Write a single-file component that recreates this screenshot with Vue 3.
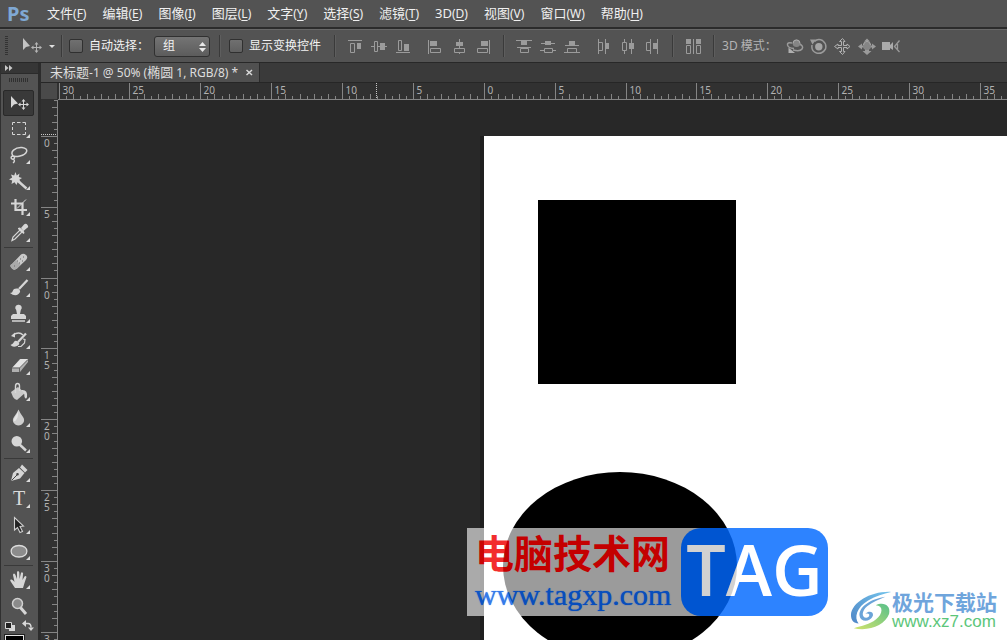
<script setup>
import { computed, onBeforeUnmount, onMounted, ref } from 'vue'

const menus = [
  ['文件', 'F'], ['编辑', 'E'], ['图像', 'I'], ['图层', 'L'], ['文字', 'Y'], ['选择', 'S'],
  ['滤镜', 'T'], ['3D', 'D'], ['视图', 'V'], ['窗口', 'W'], ['帮助', 'H'],
]

const L = '#d6d6d6'
const D = '#9b9b9b'
const fill = (d, f = L) => ({ d, f, s: 'none', w: 0 })
const line = (d, w = 1, s = L, f = 'none') => ({ d, f, s, w })

const toolGroups = [
  [
    { name: '移动工具', active: true, shapes: [fill('M2 3V15L5 11.500L9 10.500Z'), line('M14.500 7V16M10 11.500H19'), fill('M14.500 6l2 2.500h-4zM14.500 17l2-2.500h-4zM9 11.500l2.500-2v4zM20 11.500l-2.500-2v4z')] },
    { name: '矩形选框工具', more: true, shapes: [line('M3.500 6V3.500H6M8 3.500H11.500M13.500 3.500H16.500V6M16.500 8V11M16.500 13V15.500H13.500M11.500 15.500H8M6 15.500H3.500V13M3.500 11V8')] },
    { name: '套索工具', more: true, shapes: [line('M5 11.500C-1 7 7 2 13 2.500C21 3.500 18 9.500 11 11C8 11.700 6 12 4 11C1 11 2 15 4.500 14C6.500 13 5 11 4 11M4.500 14C6 15.500 5.500 17 4 18', 1.5)] },
    { name: '魔棒工具', more: true, shapes: [fill('M6.500 1L7.700 4.500L10.500 2.500L9.800 6L13 7L10.300 8.700L12 12L8.700 11L7.500 14L5.500 11.200L2.500 13L3.200 9.500L0 8.500L3.200 6.500L2 3.500L5.200 4.600Z'), line('M9 10L17.500 17.500', 2.4)] },
    { name: '裁剪工具', more: true, shapes: [line('M6.500 2V13H18M2 6.500H13.500V18', 2.2), line('M8 11.500L17 2.500', 1)] },
    { name: '吸管工具', more: true, shapes: [line('M3 17.500L4 14L11 7L13 9L6 16Z', 1.2, L, '#555'), fill('M9 5L11 4.500L13.500 7L15 8.500L15.500 10L14.500 11L9 6ZM12 5L15 1.500Q17 0 18.500 2T18 5L14.500 8Z')] },
  ],
  [
    { name: '修复画笔', more: true, shapes: [fill('M3 12L12 2.500Q14.500 1 17 3T17 8L8 16.500Q5 19 2.500 16T3 12Z', '#c9c9c9'), fill('M3 12L7 8L11.500 13L8 16.500Q5 19 2.500 16T3 12Z', '#aaa'), line('M8 9h1M11 7h1M10 11h1M13 9h1M5 14h1M14 5h1', 1, '#666')] },
    { name: '画笔工具', more: true, shapes: [line('M18.500 2L10 11', 2.3), fill('M1 15Q3.500 15 4 12.500T9 10.500Q13 13 9.500 16T1 15Z')] },
    { name: '仿制图章', more: true, shapes: [fill('M9.500 .800a3 3 0 0 1 2.300 5.200L11 10h4l2 2v3H2v-3l2-2h4L7.200 6A3 3 0 0 1 9.500 .800Z'), line('M3 17H16', 1.5)] },
    { name: '历史记录画笔', more: true, shapes: [line('M4 5Q10 1 14 5', 1.3), fill('M2 6L6 2.500V7.500Z'), line('M17 3.500L9 12', 2.2), fill('M1.500 15Q4 14 5 12T9 11.500Q12 14 8 16T1.500 15Z'), line('M14 9L16 9.500L15.500 13L12 16.500H9', 1.2)] },
    { name: '橡皮擦', more: true, shapes: [fill('M3 12L11 3H19V6L11 16H3Z', '#b0b0b0'), fill('M3.500 11.500L11.500 3H19L11 11.500Z', '#e3e3e3'), line('M3 12H10.500L19 3.500M10.500 12V16', 1, '#666')] },
    { name: '油漆桶', more: true, shapes: [fill('M2 10L9 5L16 11L8 18Q6 18 4 15Z', '#c9c9c9'), line('M6.500 11V4.500Q6.500 1.500 8.500 1.500T10.500 4V9', 1.4), fill('M12 8Q19 7 18 15Q17 18 15.500 15Q16 12 14 10Z')] },
    { name: '模糊工具', more: true, shapes: [fill('M9.500 1.500Q11 5 14 9C17 13 13.500 17.500 9.500 17.500S2 13 5 9Q8 5 9.500 1.500Z', '#cecece'), fill('M9 4Q9.500 9 7 12Q6 14 4.800 12.500Q4.500 11 6 9Z', '#e5e5e5')] },
    { name: '减淡工具', more: true, shapes: [line('M10 10L17 16.500', 2.4), fill('M7.800 2a5.300 5.300 0 1 1 0 10.600a5.300 5.300 0 1 1 0-10.600')] },
  ],
  [
    { name: '钢笔工具', more: true, shapes: [fill('M2 18L4 10L10 5L15.500 10L11 15.500Z'), fill('M11 4.500L13 1.500L18.500 7L16 9.500Z'), line('M2.500 17.500L8.500 11.500', 1, '#444'), fill('M8.500 10a1.300 1.300 0 1 1 0 2.600a1.300 1.300 0 1 1 0-2.600', '#444')] },
    { name: '文字工具', more: true, letter: 'T', shapes: [] },
    { name: '路径选择', more: true, shapes: [line('M5.500 2.500V15L8.500 12.500L11 17.500L13.500 16.500L11 11.500L14.500 11Z', 1.1, '#d0d0d0', '#222')] },
    { name: '椭圆工具', more: true, shapes: [line('M10 4.500c10.500 0 10.500 11.500 0 11.500s-10.500-11.500 0-11.500', 1.3, '#dcdcdc', '#8c8c8c')] },
  ],
  [
    { name: '抓手工具', more: true, shapes: [fill('M6 18L2 12Q.500 10 2 9.500T5.500 12L4 5Q4 3.500 5 3.500T6.500 5L8 9L8 2.500Q8 1 9 1T10.300 2.500L10.500 9L12 3Q12.500 2 13.500 2.500T14 4L13.500 10L15.500 6.500Q17 5.500 17.500 7L15.500 13L14 18Z')] },
    { name: '缩放工具', shapes: [line('M11 11L17 18', 3), line('M8.500 2.500a5 5 0 1 1 0 10a5 5 0 1 1 0-10', 1.5, '#d0d0d0', '#8b8b8b')] },
  ],
]

const alignVertical = [
  { name: '顶对齐', shapes: [line('M1 2.500H15', 1, D), line('M3.500 5.500H7.500V14.500H3.500Z', 1, D), fill('M10 5H14V11H10Z', D)] },
  { name: '垂直居中对齐', shapes: [line('M0 8.500H3M7 8.500H16M3.500 3.500H6.500V13.500H3.500Z', 1, D), fill('M9 5H14V12H9Z', D)] },
  { name: '底对齐', shapes: [line('M1 14.500H15M3.500 2.500H6.500V12.500H3.500Z', 1, D), fill('M9 6H14V13H9Z', D)] },
]
const alignHorizontal = [
  { name: '左对齐', shapes: [line('M1.500 2V16M3.500 10.500H13.500V14.500H3.500Z', 1, D), fill('M3 3H10V8H3Z', D)] },
  { name: '水平居中对齐', shapes: [line('M8.500 1V10M8.500 14V16M3.500 10.500H13.500V14.500H3.500Z', 1, D), fill('M5 4H12V8H5Z', D)] },
  { name: '右对齐', shapes: [line('M14.500 2V16M2.500 10.500H12.500V14.500H2.500Z', 1, D), fill('M6 3H13V8H6Z', D)] },
]
const distributeVertical = [
  { name: '按顶分布', shapes: [line('M0 2.500H16M1 9.500H15M4.500 10.500H12.500V14.500H4.500Z', 1, D), fill('M5 3H11V7H5Z', D)] },
  { name: '垂直居中分布', shapes: [line('M1 5.500H15M0 12.500H4M12 12.500H16M4.500 10.500H12.500V14.500H4.500Z', 1, D), fill('M5 3H11V7H5Z', D)] },
  { name: '按底分布', shapes: [line('M1 7.500H15M0 14.500H16M3.500 14.500V10.500H12.500V14.500', 1, D), fill('M5 3H11V7H5Z', D)] },
]
const distributeHorizontal = [
  { name: '按左分布', shapes: [line('M2.500 1V16M9.500 1V16M2.500 4.500H6.500V12.500H2.500', 1, D), fill('M9 5H13V11H9Z', D)] },
  { name: '水平居中分布', shapes: [line('M4.500 1V4M4.500 12V16M11.500 1V16M2.500 4.500H6.500V12.500H2.500Z', 1, D), fill('M9 5H14V11H9Z', D)] },
  { name: '按右分布', shapes: [line('M6.500 1V16M13.500 1V16M2.500 4.500H6.500V12.500H2.500Z', 1, D), fill('M9 5H13V11H9Z', D)] },
]
const autoAlign = [
  { name: '自动对齐图层', shapes: [line('M8.500 1V16M1.500 7.500H5.500V15.500H1.500ZM11.500 7.500H15.500V15.500H11.500Z', 1, D), fill('M1 1H6V6H1ZM11 1H16V6H11Z', D)] },
]
const modes3d = [
  { name: '旋转 3D 对象', shapes: [line('M6 5Q1 4 1.500 7T8 10.500M13.500 6Q18 8 16 11T7 12', 1.5, D), fill('M10.500 1.500a3.800 3.800 0 1 1 0 7.600a3.800 3.800 0 1 1 0-7.600', '#858585'), line('M7 5.500a3.500 3.500 0 0 1 7 0', 1, '#ababab'), fill('M2.500 9.500V15H9Z', '#b0b0b0')] },
  { name: '滚动 3D 对象', shapes: [line('M4.500 3.500Q8 0 12.500 2.500Q17 6 15.500 11Q12 16.500 6.500 15Q1 13 2 7', 1.5, D), fill('M0 1.500H6L2.500 6.500Z', D), fill('M8.800 5a3.700 3.700 0 1 1 0 7.400a3.700 3.700 0 1 1 0-7.400', '#a5a5a5')] },
  { name: '拖动 3D 对象', shapes: [line('M8.500 .500L11 3.500H9.500V7.500H13V6L16 8.500L13 11V9.500H9.500V13.500H11L8.500 16.500L5.500 13.500H7.500V9.500H4V11L.500 8.500L4 6V7.500H7.500V3.500H5.500Z', 1, '#b0b0b0')] },
  { name: '滑动 3D 对象', shapes: [fill('M9 .500L12 3.500H6ZM0 8.500L4 5.500V7.500H14V5.500L18 8.500L14 11.500V9.500H4V11.500ZM9 17L4.500 13H7V10H11V13H13.500Z', D), fill('M9 4a4 4 0 1 1 0 8a4 4 0 1 1 0-8', '#858585'), line('M5.500 7a3.500 3.500 0 0 1 7 0', 1, '#ababab')] },
  { name: '缩放 3D 对象', shapes: [fill('M0 4H8V7L11 4V12L8 10V12H0Z', '#aaa'), line('M17.500 2.500L12.500 8.500L17.500 14M15.500 6V11', 1.3, D)] },
]

const width = ref(window.innerWidth)
const height = ref(window.innerHeight)
function measure() {
  width.value = window.innerWidth
  height.value = window.innerHeight
}
onMounted(() => window.addEventListener('resize', measure))
onBeforeUnmount(() => window.removeEventListener('resize', measure))

const step = 70.87
function ticks(origin, length) {
  const list = []
  const first = -Math.floor((origin * 10) / step)
  for (let i = first; ; i++) {
    const pos = Math.floor(origin + (i * step) / 10) + 0.5
    if (pos > length) return list
    const major = i % 10 === 0
    list.push({ pos, size: major ? 16 : i % 2 === 0 ? 5 : 3, label: major ? String(Math.abs(i) / 2) : '' })
  }
}
const topTicks = computed(() => ticks(426.3, width.value - 58))
const sideTicks = computed(() => ticks(36.3, height.value - 100))
</script>

<template>
  <div class="app">
    <nav class="menubar">
      <span class="logo">Ps</span>
      <button v-for="m in menus" :key="m[1]" class="menu">{{ m[0] }}<span class="key">(<u>{{ m[1] }}</u>)</span></button>
    </nav>

    <div class="options">
      <span class="grip"></span>
      <button class="current" aria-label="移动工具">
        <svg width="36" height="20" viewBox="0 0 36 20">
          <path d="M3 2V14L6 11L10 10Z" fill="#c4c4c4" />
          <path d="M16.500 7V16M12 11.500H21" stroke="#b5b5b5" />
          <path d="M16.500 6l2 2.500h-4zM16.500 17l2-2.500h-4zM11 11.500l2.500-2v4zM22 11.500l-2.500-2v4z" fill="#b5b5b5" />
          <path d="M29 9H35L32 12Z" fill="#e0e0e0" />
        </svg>
      </button>
      <span class="rule"></span>
      <label class="check"><input type="checkbox" />自动选择：</label>
      <div class="picker">
        <select aria-label="自动选择"><option>组</option></select>
        <svg width="7" height="10" viewBox="0 0 7 10"><path d="M0 4L3.500 0L7 4ZM0 6H7L3.500 10Z" fill="#e8e8e8" /></svg>
      </div>
      <span class="rule"></span>
      <label class="check"><input type="checkbox" />显示变换控件</label>
      <span class="rule wide"></span>
      <template v-for="(group, g) in [alignVertical, alignHorizontal, distributeVertical, distributeHorizontal, autoAlign]" :key="g">
        <span v-if="g === 2 || g === 4" class="rule"></span>
        <div class="group">
          <button v-for="b in group" :key="b.name" class="opt" :aria-label="b.name">
            <svg width="17" height="17" viewBox="0 0 17 17">
              <path v-for="(p, i) in b.shapes" :key="i" :d="p.d" :fill="p.f" :stroke="p.s" :stroke-width="p.w" />
            </svg>
          </button>
        </div>
      </template>
      <span class="rule"></span>
      <span class="mode">3D 模式：</span>
      <div class="group">
        <button v-for="b in modes3d" :key="b.name" class="opt" :aria-label="b.name">
          <svg width="18" height="17" viewBox="0 0 18 17">
            <path v-for="(p, i) in b.shapes" :key="i" :d="p.d" :fill="p.f" :stroke="p.s" :stroke-width="p.w" />
          </svg>
        </button>
      </div>
    </div>

    <div class="workspace">
      <aside class="tools">
        <button class="expand" aria-label="展开面板">
          <svg width="8" height="6" viewBox="0 0 8 6"><path d="M0 0L3.500 3L0 6ZM4 0L7.500 3L4 6Z" fill="#c8c8c8" /></svg>
        </button>
        <div class="handle"></div>
        <div v-for="(group, g) in toolGroups" :key="g" class="toolgroup">
          <button v-for="t in group" :key="t.name" class="tool" :class="{ active: t.active, more: t.more }" :aria-label="t.name">
            <svg width="20" height="20" viewBox="0 0 20 20">
              <path v-for="(p, i) in t.shapes" :key="i" :d="p.d" :fill="p.f" :stroke="p.s" :stroke-width="p.w" />
              <text v-if="t.letter" class="letter" x="10" y="16" text-anchor="middle">{{ t.letter }}</text>
            </svg>
          </button>
        </div>
        <div class="colors">
          <svg width="30" height="12" viewBox="0 0 30 12">
            <path d="M5 5H11V11H5Z" fill="#d8d8d8" />
            <path d="M1.500 2.500H7.500V8.500H1.500Z" fill="#222" stroke="#d8d8d8" />
            <path d="M21 3.500H24Q27 3.500 27 7.500" fill="none" stroke="#d8d8d8" stroke-width="1.500" />
            <path d="M18 3.500L22 0V7ZM24 7.500H30L27 11Z" fill="#d8d8d8" />
          </svg>
          <button class="swatch" aria-label="前景色"></button>
        </div>
      </aside>

      <main class="document">
        <div class="tabs">
          <div class="tab">
            <span class="title">未标题<span class="latin">-1 @ 50% (</span>椭圆<span class="latin"> 1, RGB/8) *</span></span>
            <button class="close" aria-label="关闭">
              <svg width="7" height="7" viewBox="0 0 7 7"><path d="M.500 1L6 6M6 1L.500 6" stroke="#d8d8d8" stroke-width="1.500" /></svg>
            </button>
          </div>
        </div>
        <div class="view">
          <div class="corner"></div>
          <svg class="ruler top" width="100%" height="17">
            <template v-for="t in topTicks" :key="t.pos">
              <path :d="`M${t.pos} ${16 - t.size}V16`" stroke="#858585" />
              <text v-if="t.label" class="num" :x="t.pos + 3" y="11">{{ t.label }}</text>
            </template>
            <path d="M318.500 0V16" stroke="#c8c8c8" stroke-dasharray="1 1" />
          </svg>
          <svg class="ruler side" width="17" height="100%">
            <template v-for="t in sideTicks" :key="t.pos">
              <path :d="`M${16 - t.size} ${t.pos}H16`" stroke="#858585" />
              <template v-if="t.label">
                <text v-for="(c, i) in t.label" :key="i" class="num" x="3" :y="t.pos + 10 + i * 10">{{ c }}</text>
              </template>
            </template>
            <path d="M0 34.500H16" stroke="#c8c8c8" stroke-dasharray="1 1" />
          </svg>
          <div class="canvas">
            <div class="artboard">
              <div class="square"></div>
              <div class="oval"></div>
            </div>
          </div>
        </div>
      </main>
    </div>

    <div class="stamp">
      <div class="words">
        <strong class="site">电脑技术网</strong>
        <span class="url">www.tagxp.com</span>
      </div>
      <div class="tag">TAG</div>
    </div>

    <div class="credit">
      <svg width="42" height="42" viewBox="0 0 44 42">
        <defs>
          <linearGradient id="sky" x1="0" y1="1" x2="1" y2="0"><stop offset="0" stop-color="#4f86c6" /><stop offset="1" stop-color="#74c4ec" /></linearGradient>
          <linearGradient id="leaf" x1="0" y1="1" x2="1" y2="0"><stop offset="0" stop-color="#d2e36c" /><stop offset="1" stop-color="#58c08a" /></linearGradient>
        </defs>
        <path d="M43 1C22 0 2 12 1 25C1 31 4 34 9 34C4 28 7 17 19 10C27 5 35 3 43 1Z" fill="url(#sky)" />
        <path d="M37 6C23 8 9 16 10 26C11 33 21 33 24 26C25 22 20 20 16 24C22 22 21 28 17 28C12 28 12 21 18 16C24 11 31 9 37 6Z" fill="#6ba4d8" />
        <path d="M27 15C35 15 35 24 27 30C21 35 12 37 4 39C19 43 37 36 41 24C43 15 35 11 27 15Z" fill="url(#leaf)" />
      </svg>
      <div class="names">
        <strong>极光下载站</strong>
        <span>www.xz7.com</span>
      </div>
    </div>
  </div>
</template>

<style>
body { margin: 0; background: #282828; }
</style>

<style scoped>
.app {
  position: relative;
  display: flex;
  flex-direction: column;
  height: 100vh;
  overflow: hidden;
  font: 12px/16px "Noto Sans", "Noto Sans CJK SC", sans-serif;
  color: #e6e6e6;
  background: #282828;
}
button { padding: 0; border: 0; background: none; color: inherit; font: inherit; }
svg { display: block; }

.menubar {
  display: flex;
  align-items: center;
  flex: none;
  gap: 16px;
  height: 27px;
  padding-left: 7px;
  background: #535353;
  border-bottom: 2px solid #2b2b2b;
}
.logo { width: 24px; font: bold 20px/26px "Noto Sans", sans-serif; color: #7fa8d4; }
.menu { font-size: 13px; line-height: 20px; color: #f0f0f0; white-space: nowrap; }
.key { font-size: 12px; }
.key u { text-underline-offset: 2px; }

.options {
  display: flex;
  align-items: center;
  flex: none;
  height: 32px;
  padding-left: 5px;
  background: #535353;
  border-top: 1px solid #686868;
  border-bottom: 1px solid #282828;
  white-space: nowrap;
}
.grip { width: 3px; height: 20px; background: repeating-linear-gradient(#333 0 1px, #535353 1px 2px); }
.current { margin-left: 12px; }
.rule { flex: none; width: 1px; height: 22px; margin: 0 7px 0 8px; background: #3a3a3a; border-right: 1px solid #5e5e5e; }
.current + .rule { margin-left: 5px; }
.picker + .rule { margin: 0 9px; }
.group + .rule { margin-left: 0; }
.rule.wide { margin-left: 13px; }
.check { display: flex; align-items: center; gap: 6px; color: #f2f2f2; }
.check input {
  appearance: none;
  box-sizing: border-box;
  width: 14px;
  height: 14px;
  margin: 0 0 0 -1px;
  border: 1px solid #303030;
  border-radius: 2px;
  background: linear-gradient(#707070, #606060);
}
.picker { position: relative; margin-left: 5px; }
.picker select {
  appearance: none;
  display: block;
  width: 56px;
  height: 21px;
  padding: 0 8px;
  border: 1px solid #303030;
  border-radius: 3px;
  background: linear-gradient(#747474, #5c5c5c);
  color: #f2f2f2;
  font: inherit;
}
.picker svg { position: absolute; top: 6px; right: 4px; pointer-events: none; }
.group { display: flex; margin-right: 8px; }
.opt { display: grid; place-items: center; width: 24px; height: 24px; }
.mode { width: 61px; color: #b4b4b4; }

.workspace { display: flex; flex: 1; min-height: 0; }
.tools {
  flex: none;
  width: 37px;
  overflow: hidden;
  background: #535353;
  border-left: 1px solid #303030;
  border-right: 3px solid #2c2c2c;
}
.expand { display: flex; align-items: center; width: 100%; height: 11px; padding-left: 4px; background: #363636; border-bottom: 1px solid #2b2b2b; }
.handle { width: 20px; height: 4px; margin: 4px 8px 8px; background: repeating-linear-gradient(90deg, #303030 0 1px, #535353 1px 2px); }
.toolgroup { display: flex; flex-direction: column; align-items: center; margin: 0 5px 0 3px; }
.toolgroup + .toolgroup { border-top: 1px solid #393939; margin-top: 1px; padding-top: 1px; }
.tool { position: relative; display: grid; place-items: center; box-sizing: border-box; width: 31px; height: 26px; }
.tool.active { background: #393939; border: 1px solid #292929; border-radius: 2px; }
.tool.more::after {
  content: "";
  position: absolute;
  right: 4px;
  bottom: 4px;
  border: 2px solid #dcdcdc;
  border-top-color: transparent;
  border-left-color: transparent;
}
.letter { font: 20px "Liberation Serif", serif; fill: #dadada; }
.colors { padding: 1px 3px; }
.swatch { display: block; width: 19px; height: 19px; margin: 3px 0 0 1px; background: #000; border: 1px solid #e5e5e5; outline: 1px solid #222; }

.document { display: flex; flex-direction: column; flex: 1; min-width: 0; }
.tabs { display: flex; flex: none; height: 19px; background: #3a3a3a; border-bottom: 1px solid #262626; }
.tab { display: flex; align-items: center; gap: 8px; padding: 0 6px 0 9px; background: #505050; border-right: 1px solid #2b2b2b; color: #dedede; white-space: nowrap; }
.title { font-size: 13px; }
.latin { font-size: 12px; }
.view { display: grid; grid-template: 17px 1fr / 17px 1fr; flex: 1; min-height: 0; }
.corner {
  background: #4a4a4a;
  border-right: 1px solid #303030;
  border-bottom: 1px solid #303030;
}
.ruler { background: #313131; overflow: hidden; }
.top { border-bottom: 1px solid #858585; height: 16px; }
.side { border-right: 1px solid #858585; width: 16px; }
.num { font: 10px "Noto Sans", sans-serif; fill: #b2b2b2; }
.canvas { position: relative; overflow: hidden; background: #282828; }
.artboard { position: absolute; inset: 36px 0 0 426px; background: #fff; box-shadow: -4px 0 0 #1f1f1f; overflow: hidden; }
.square { position: absolute; left: 54px; top: 64px; width: 198px; height: 184px; background: #000; }
.oval { position: absolute; left: 19px; top: 336px; width: 234px; height: 188px; border-radius: 50%; background: #000; }

.stamp { position: absolute; left: 467px; top: 528px; display: flex; height: 88px; background: rgba(255, 255, 255, 0.74); opacity: 0.82; }
.words { display: flex; flex-direction: column; width: 206px; padding-left: 8px; white-space: nowrap; }
.site { font: bold 39px/46px "Noto Sans CJK SC", sans-serif; color: #f00000; }
.url { font: 30px/42px "Liberation Serif", serif; color: #0a5fe6; text-shadow: 0 0 1px #0a5fe6; }
.tag { width: 147px; border-radius: 20px; background: #0068ff; color: #fff; text-align: center; font: 600 70px/82px "Open Sans", sans-serif; }

.credit { position: absolute; right: 10px; bottom: 8px; display: flex; align-items: center; }
.names { display: flex; flex-direction: column; white-space: nowrap; }
.names strong { font: bold 21px/22px "Noto Sans CJK SC", sans-serif; color: #6fa5dc; }
.names span { font: 17px/20px "Liberation Sans", sans-serif; color: #5cc67a; }
</style>
